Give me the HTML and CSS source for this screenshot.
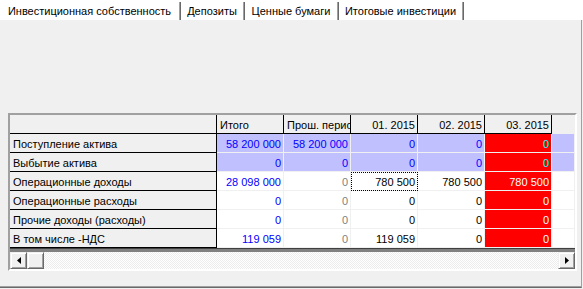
FILE: index.html
```html
<!DOCTYPE html>
<html lang="ru">
<head>
<meta charset="utf-8">
<title>Инвестиции</title>
<link rel="stylesheet" href="styles.css">
</head>
<body>
<div class="window">
  <div class="tabs">
    <div class="tab tab-1 active">Инвестиционная собственность</div>
    <div class="tab tab-2">Депозиты</div>
    <div class="tab tab-3">Ценные бумаги</div>
    <div class="tab tab-4">Итоговые инвестиции</div>
  </div>
  <div class="panel">
    <div class="grid">
      <div class="row head">
        <div class="c fixed"></div>
        <div class="c h left">Итого</div>
        <div class="c h left clip">Прош. период</div>
        <div class="c h">01. 2015</div>
        <div class="c h">02. 2015</div>
        <div class="c h">03. 2015</div>
        <div class="c h tail"></div>
      </div>
      <div class="row">
        <div class="c fixed">Поступление актива</div>
        <div class="c lilac blue">58 200 000</div>
        <div class="c lilac blue">58 200 000</div>
        <div class="c lilac blue">0</div>
        <div class="c lilac blue">0</div>
        <div class="c red cyan">0</div>
        <div class="c lilac"></div>
      </div>
      <div class="row">
        <div class="c fixed">Выбытие актива</div>
        <div class="c lilac blue">0</div>
        <div class="c lilac blue">0</div>
        <div class="c lilac blue">0</div>
        <div class="c lilac blue">0</div>
        <div class="c red cyan">0</div>
        <div class="c lilac"></div>
      </div>
      <div class="row">
        <div class="c fixed">Операционные доходы</div>
        <div class="c blue">28 098 000</div>
        <div class="c grey">0</div>
        <div class="c black focus">780 500</div>
        <div class="c black">780 500</div>
        <div class="c red white">780 500</div>
        <div class="c"></div>
      </div>
      <div class="row">
        <div class="c fixed">Операционные расходы</div>
        <div class="c blue">0</div>
        <div class="c grey">0</div>
        <div class="c black">0</div>
        <div class="c black">0</div>
        <div class="c red white">0</div>
        <div class="c"></div>
      </div>
      <div class="row">
        <div class="c fixed">Прочие доходы (расходы)</div>
        <div class="c blue">0</div>
        <div class="c grey">0</div>
        <div class="c black">0</div>
        <div class="c black">0</div>
        <div class="c red white">0</div>
        <div class="c"></div>
      </div>
      <div class="row">
        <div class="c fixed">В том числе -НДС</div>
        <div class="c blue">119 059</div>
        <div class="c grey">0</div>
        <div class="c black">119 059</div>
        <div class="c black">0</div>
        <div class="c red white">0</div>
        <div class="c"></div>
      </div>
      <div class="band"></div>
      <div class="hscroll">
        <div class="sb-btn"><svg width="4" height="7" viewBox="0 0 4 7"><polygon points="4,0 4,7 0,3.5" fill="#000"/></svg></div>
        <div class="sb-btn thumb"></div>
        <div class="sb-track"></div>
        <div class="sb-btn"><svg width="4" height="7" viewBox="0 0 4 7"><polygon points="0,0 0,7 4,3.5" fill="#000"/></svg></div>
      </div>
    </div>
  </div>
</div>
</body>
</html>
```

FILE: styles.css
```css
* { box-sizing: border-box; }
html, body {
  margin: 0;
  padding: 0;
  background: #f0f0f0;
}
body {
  font-family: "Liberation Sans", Arial, sans-serif;
  font-size: 11px;
  color: #000;
}
.window {
  width: 583px;
  height: 288px;
  display: flex;
  flex-direction: column;
}
.tabs {
  height: 20px;
  background: #fff;
  display: flex;
  align-items: flex-end;
}
.tab {
  height: 18px;
  line-height: 19px;
  text-align: center;
  white-space: nowrap;
  border-right: 1px solid #a0a0a0;
  box-shadow: 1px 0 0 #696969;
  margin-right: 1px;
}
.tab-1 { width: 180px; }
.tab-2 { width: 63px; }
.tab-3 { width: 93px; }
.tab-4 { width: 124px; }
.panel {
  flex: 1;
  width: 582px;
  background: #f0f0f0;
  border-right: 1px solid #a0a0a0;
  border-bottom: 1px solid #696969;
  box-shadow: inset 0 -1px 0 #a0a0a0;
  padding-top: 93px;
}
.grid {
  margin-left: 8px;
  width: 569px;
  border: 2px solid;
  border-color: #a0a0a0 #fff #fff #a0a0a0;
  box-shadow: inset 1px 1px 0 #696969;
  background: #fff;
  overflow: hidden;
}
.row {
  display: grid;
  grid-template-columns: 207px repeat(5, 67px) 1fr;
  height: 19px;
}
.c {
  height: 19px;
  padding: 2px 2px 0 0;
  line-height: 16px;
  text-align: right;
  white-space: nowrap;
  overflow: hidden;
  border-right: 1px solid #f0f0f0;
  border-bottom: 1px solid #f0f0f0;
  background: #fff;
}
.c.fixed {
  text-align: left;
  padding-left: 3px;
  background: #f0f0f0;
  border-right-color: #000;
  border-bottom-color: #000;
}
.c.h {
  background: #f0f0f0;
  border-right-color: #000;
  border-bottom-color: #000;
}
.c.h.left { text-align: left; padding-left: 3px; }
.c.h.clip { text-overflow: clip; }
.c.h.tail { border-right: none; border-bottom-color: #f0f0f0; }
.lilac { background: #c0c0ff !important; }
.red { background: #ff0000 !important; }
.blue { color: #0000ff; }
.grey { color: #808080; }
.black { color: #000; }
.cyan { color: #00ffff; }
.white { color: #fff; }
.focus {
  outline: 1px dotted #000;
  outline-offset: -1px;
}
.band {
  height: 4px;
  background: #808080;
  border-top: 1px solid #404040;
}
.hscroll {
  display: flex;
  height: 17px;
  background: #f0f0f0;
}
.sb-btn {
  width: 17px;
  height: 17px;
  display: flex;
  align-items: center;
  justify-content: center;
  background: #f0f0f0;
  border: 1px solid;
  border-color: #f0f0f0 #696969 #696969 #f0f0f0;
  box-shadow: inset 1px 1px 0 #fff, inset -1px -1px 0 #a0a0a0;
}
.sb-btn svg { display: block; }
.sb-track {
  flex: 1;
  background: repeating-conic-gradient(#fff 0 25%, #ececec 0 50%) 0 0 / 2px 2px;
}
```
